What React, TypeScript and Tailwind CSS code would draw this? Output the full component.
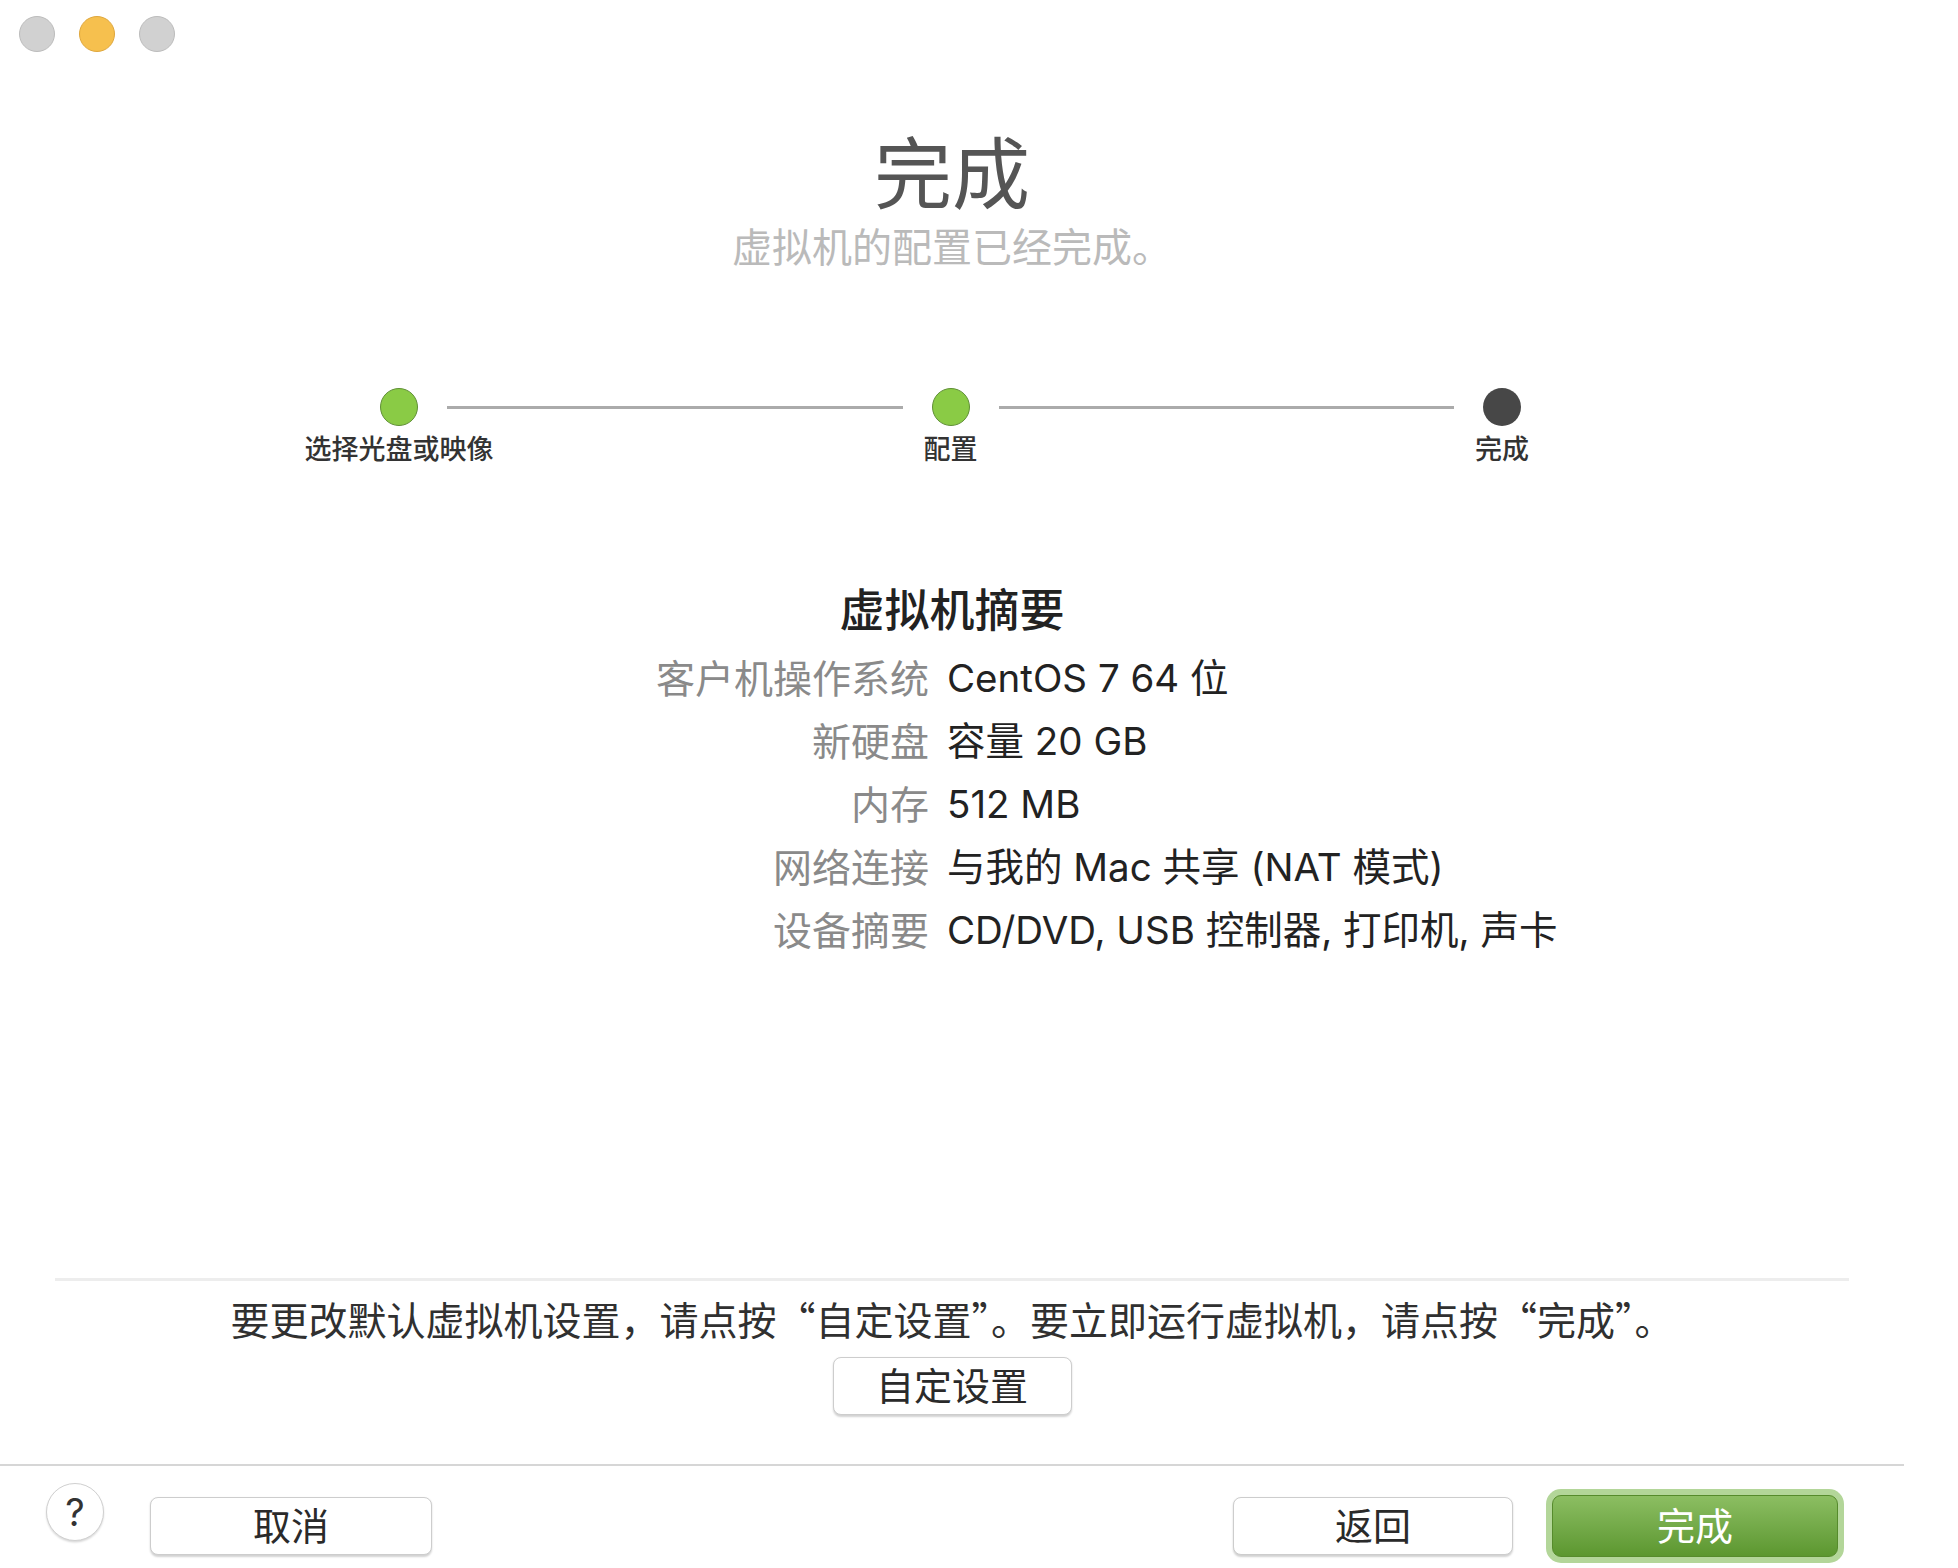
import React from 'react';

const steps = [
    { label: '选择光盘或映像', done: true },
    { label: '配置', done: true },
    { label: '完成', done: false },
];

const summary = [
    { label: '客户机操作系统', value: 'CentOS 7 64 位' },
    { label: '新硬盘', value: '容量 20 GB' },
    { label: '内存', value: '512 MB' },
    { label: '网络连接', value: '与我的 Mac 共享 (NAT 模式)' },
    { label: '设备摘要', value: 'CD/DVD, USB 控制器, 打印机, 声卡' },
];

const Dot = ({ done }: { done: boolean }) =>
    done ? (
        <div className="w-[38px] h-[38px] rounded-full bg-[#8acb45] border-[1.5px] border-[#5f8f35]" />
    ) : (
        <div className="w-[38px] h-[38px] rounded-full bg-[#474747]" />
    );

const PlainButton = ({ children, width }: { children: React.ReactNode; width: string }) => (
    <button
        className={`${width} h-[58px] flex items-center justify-center rounded-[8px] bg-white border border-[#cdcdcd] shadow-[0_1.5px_2px_rgba(0,0,0,0.18)] text-[38px] leading-none text-[#2a2a2a]`}
    >
        {children}
    </button>
);

export default function App() {
    return (
        <div className="w-[1958px] h-[1568px] bg-white overflow-hidden font-['Inter','Noto_Sans_CJK_SC',sans-serif]">
            <div className="w-[1904px] h-[1568px] bg-white flex flex-col">
                {/* title bar */}
                <div className="h-[68px] flex items-center gap-[24px] pl-[19px]">
                    <div className="w-[36px] h-[36px] rounded-full bg-[#d1d1d1] border border-[#bcbcbc]" />
                    <div className="w-[36px] h-[36px] rounded-full bg-[#f6c04e] border border-[#dfa73d]" />
                    <div className="w-[36px] h-[36px] rounded-full bg-[#d1d1d1] border border-[#bcbcbc]" />
                </div>

                {/* heading */}
                <div className="mt-[67px] h-[80px] flex items-center justify-center text-[78px] leading-none text-[#555555]">
                    完成
                </div>
                <div className="mt-[11px] h-[44px] flex items-center justify-center text-[40px] leading-none text-[#bababa]">
                    虚拟机的配置已经完成。
                </div>

                {/* stepper */}
                <div className="mt-[118px] mx-[380px] w-[1141px] grid grid-cols-[38px_1fr_38px_1fr_38px] grid-rows-[38px_30px] gap-y-[8px] items-center">
                    <Dot done={steps[0].done} />
                    <div className="h-[3px] mx-[29px] bg-[#ababab]" />
                    <Dot done={steps[1].done} />
                    <div className="h-[3px] mx-[29px] bg-[#ababab]" />
                    <Dot done={steps[2].done} />
                    {steps.map((s, i) => (
                        <div
                            key={s.label}
                            className={`${i === 0 ? 'col-start-1' : i === 1 ? 'col-start-3' : 'col-start-5'} h-[30px] flex items-center justify-center`}
                        >
                            <span className="whitespace-nowrap text-[27px] leading-none font-medium text-[#333333]">{s.label}</span>
                        </div>
                    ))}
                </div>

                {/* summary */}
                <div className="mt-[119px] h-[54px] flex items-center justify-center text-[45px] leading-none font-medium text-[#222222]">
                    虚拟机摘要
                </div>
                <div className="mt-[10px] grid grid-cols-[929px_1fr] gap-x-[18px]">
                    {summary.map(row => (
                        <React.Fragment key={row.label}>
                            <div className="h-[63px] flex items-center justify-end text-[39px] leading-none text-[#8a8a8a]">{row.label}</div>
                            <div className="h-[63px] flex items-center text-[38.5px] leading-none text-[#222222] whitespace-nowrap">{row.value}</div>
                        </React.Fragment>
                    ))}
                </div>

                {/* bottom section */}
                <div className="mt-auto flex flex-col">
                    <div className="mx-[55px] h-[3px] bg-[#ededed]" />
                    <div className="mt-[15px] h-[44px] flex items-center justify-center font-['Noto_Sans_CJK_SC',sans-serif] text-[39px] leading-none text-[#303030] whitespace-nowrap">
                        要更改默认虚拟机设置，请点按“自定设置”。要立即运行虚拟机，请点按“完成”。
                    </div>
                    <div className="mt-[17px] flex justify-center">
                        <PlainButton width="w-[239px]">自定设置</PlainButton>
                    </div>
                    <div className="mt-[49px] h-[2px] bg-[#d6d6d6]" />
                    <div className="h-[102px] flex items-start pl-[46px] pr-[60px]">
                        <button className="mt-[17px] w-[58px] h-[58px] rounded-full bg-white border border-[#d0d0d0] shadow-[0_1.5px_2px_rgba(0,0,0,0.15)] flex items-center justify-center text-[38px] leading-none text-[#333333]">
                            ?
                        </button>
                        <div className="ml-[46px] mt-[31px]">
                            <PlainButton width="w-[282px]">取消</PlainButton>
                        </div>
                        <div className="flex-1" />
                        <div className="mt-[31px]">
                            <PlainButton width="w-[280px]">返回</PlainButton>
                        </div>
                        <div className="ml-[33px] mt-[23px] p-[6px] rounded-[15px] bg-[#b3d699]">
                            <button className="w-[286px] h-[62px] rounded-[9px] border border-[#568b2c] bg-gradient-to-b from-[#8cbe62] to-[#5c972f] flex items-center justify-center text-[38px] leading-none text-white">
                                完成
                            </button>
                        </div>
                    </div>
                </div>
            </div>
        </div>
    );
}
